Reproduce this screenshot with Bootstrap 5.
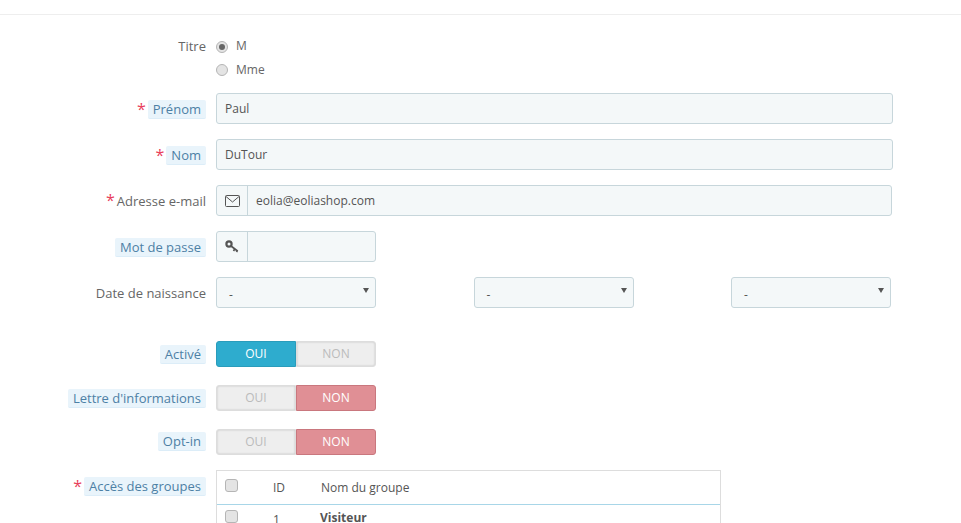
<!DOCTYPE html>
<html lang="fr"><head><meta charset="utf-8">
<title>Client</title>
<link href="https://cdn.jsdelivr.net/npm/bootstrap@5.3.0/dist/css/bootstrap.min.css" rel="stylesheet">
<style>
html,body{height:523px;overflow:hidden}
body{font-family:"Open Sans",sans-serif;font-size:12px;color:#555;background:#fff;line-height:18px}
.topline{height:15px;border-bottom:1px solid #eee}
.formwrap{padding-top:20px;width:893px}
.frow{display:flex;margin-bottom:15px}
.frow-title{margin-bottom:12px;align-items:flex-start}
.flabel{width:206px;flex:none;text-align:right;font-size:13px;color:#666;display:flex;justify-content:flex-end;align-items:center;gap:2px;padding-bottom:2px}
.nudge1{padding-top:2px}
.nudge2{padding-top:4px}
.fctl{margin-left:10px;flex:1;min-width:0}
.star{color:#e8405b;font-size:16px;line-height:15px;position:relative;top:0}
.hint{background:#e9f4fb;color:#4d80a5;padding:0 5px;border-radius:2px;border-bottom:1px solid #dcedf8;line-height:18px}
.radioline{display:flex;align-items:center;height:23px;color:#666}
.radioline-txt{position:relative;top:-1px}
.radiodot{width:12px;height:12px;border-radius:50%;background:#e4e4e4;border:1px solid #b5b5b5;margin-right:8px;flex:none;display:flex;align-items:center;justify-content:center}
.radiodot.on::after{content:"";width:6px;height:6px;border-radius:50%;background:#666}
.tinput{height:31px;background:#f4f8f9;border:1px solid #c7d6db;border-radius:3px;padding:0 8px;line-height:30px;color:#555;font-size:12px}
.groupbox{display:flex;height:31px;background:#f4f8f9;border:1px solid #c7d6db;border-radius:3px}
.addon{width:31px;flex:none;border-right:1px solid #c7d6db;display:flex;align-items:center;justify-content:center}
.addonval{padding:0 8px;line-height:29px}
.w160{width:160px}
.w676{width:676px}
.dategrid{display:flex;width:675px;justify-content:space-between}
.selbox{width:160px;height:31px;background:#f4f8f9;border:1px solid #c7d6db;border-radius:3px;padding:0 12px;line-height:33px;position:relative}
.selbox::after{content:"";position:absolute;right:6px;top:10px;border-left:3px solid transparent;border-right:3px solid transparent;border-top:5px solid #555}
.switcher{display:flex;width:160px;height:26px;font-size:12px;font-weight:500;line-height:24px;text-align:center}
.swoff{flex:1;background:#eee;color:#bbb;font-weight:400;border:1px solid #ddd;box-shadow:inset 0 0 2px #bbb}
.swoff.l{border-radius:3px 0 0 3px}.swoff.r{border-radius:0 3px 3px 0}
.swyes{flex:1;background:#2eacce;color:#fff;border:1px solid #2a9cbb;border-radius:3px 0 0 3px}
.swno{flex:1;background:#e08f95;color:#fff;border:1px solid #c9777e;border-radius:0 3px 3px 0}
.grptable{width:505px;border:1px solid #ddd;border-bottom:0}
.grphead{display:flex;align-items:center;height:34px;border-bottom:1px solid #a8d6e8}
.grprow{display:flex;align-items:center;height:30px}
.cellc{width:28px;padding-left:8px;flex:none;position:relative;top:-2px}
.grprow .cellc{top:-4px}
.cellid{width:48px;padding-left:28px;flex:none;white-space:nowrap}
.cellnm{padding-left:28px;white-space:nowrap}
.rowcell{position:relative;top:-2px}
.gname{font-weight:700;color:#555;margin-left:-1px}
.box{display:block;width:13px;height:13px;border:1px solid #b5b5b5;border-radius:3px;background:#e4e4e4}
.gap26{margin-bottom:33px}
.gapsw{margin-bottom:18px}
.gapopt{margin-bottom:15px}
.topal{align-items:flex-start}
.labeltop{height:23px}
.labelgrp{margin-top:6px}
</style></head>
<body>
<div class="topline"></div>
<form class="formwrap">
  <div class="frow frow-title">
    <div class="flabel labeltop">Titre</div>
    <div class="fctl">
      <div class="radioline"><span class="radiodot on"></span><span class="radioline-txt">M</span></div>
      <div class="radioline"><span class="radiodot"></span>Mme</div>
    </div>
  </div>
  <div class="frow">
    <div class="flabel nudge2"><span class="star">*</span><span class="hint">Prénom</span></div>
    <div class="fctl"><div class="tinput">Paul</div></div>
  </div>
  <div class="frow">
    <div class="flabel nudge2"><span class="star">*</span><span class="hint">Nom</span></div>
    <div class="fctl"><div class="tinput">DuTour</div></div>
  </div>
  <div class="frow">
    <div class="flabel nudge1"><span class="star">*</span>Adresse e-mail</div>
    <div class="fctl"><div class="groupbox w676">
      <span class="addon"><svg width="15" height="12" viewBox="0 0 15 12" fill="none" stroke="#555"><rect x=".5" y=".5" width="14" height="11" rx="1"/><path d="M1 1.500 7.500 7 14 1.500"/></svg></span>
      <span class="addonval">eolia@eoliashop.com</span>
    </div></div>
  </div>
  <div class="frow">
    <div class="flabel nudge2"><span class="hint">Mot de passe</span></div>
    <div class="fctl"><div class="groupbox w160">
      <span class="addon"><svg width="14" height="13" viewBox="0 0 14 13" fill="none" stroke="#555"><circle cx="4" cy="4" r="2.600" stroke-width="2.200"/><path d="M6 6l6.500 5M10 8.500l-1.500 2.500M12.500 10l-1 2" stroke-width="1.700"/></svg></span>
    </div></div>
  </div>
  <div class="frow gap26">
    <div class="flabel nudge1">Date de naissance</div>
    <div class="fctl"><div class="dategrid">
      <div class="selbox">-</div><div class="selbox">-</div><div class="selbox">-</div>
    </div></div>
  </div>
  <div class="frow gapsw">
    <div class="flabel nudge1"><span class="hint">Activé</span></div>
    <div class="fctl"><div class="switcher"><span class="swyes">OUI</span><span class="swoff r">NON</span></div></div>
  </div>
  <div class="frow gapsw">
    <div class="flabel nudge1"><span class="hint">Lettre d'informations</span></div>
    <div class="fctl"><div class="switcher"><span class="swoff l">OUI</span><span class="swno">NON</span></div></div>
  </div>
  <div class="frow gapopt">
    <div class="flabel"><span class="hint">Opt-in</span></div>
    <div class="fctl"><div class="switcher"><span class="swoff l">OUI</span><span class="swno">NON</span></div></div>
  </div>
  <div class="frow topal">
    <div class="flabel labeltop labelgrp"><span class="star">*</span><span class="hint">Accès des groupes</span></div>
    <div class="fctl"><div class="grptable">
      <div class="grphead"><span class="cellc"><span class="box"></span></span><span class="cellid">ID</span><span class="cellnm">Nom du groupe</span></div>
      <div class="grprow"><span class="cellc"><span class="box"></span></span><span class="cellid">1</span><span class="cellnm gname rowcell">Visiteur</span></div>
    </div></div>
  </div>
</form>
<script src="https://cdn.jsdelivr.net/npm/bootstrap@5.3.0/dist/js/bootstrap.bundle.min.js"></script>
</body></html>
